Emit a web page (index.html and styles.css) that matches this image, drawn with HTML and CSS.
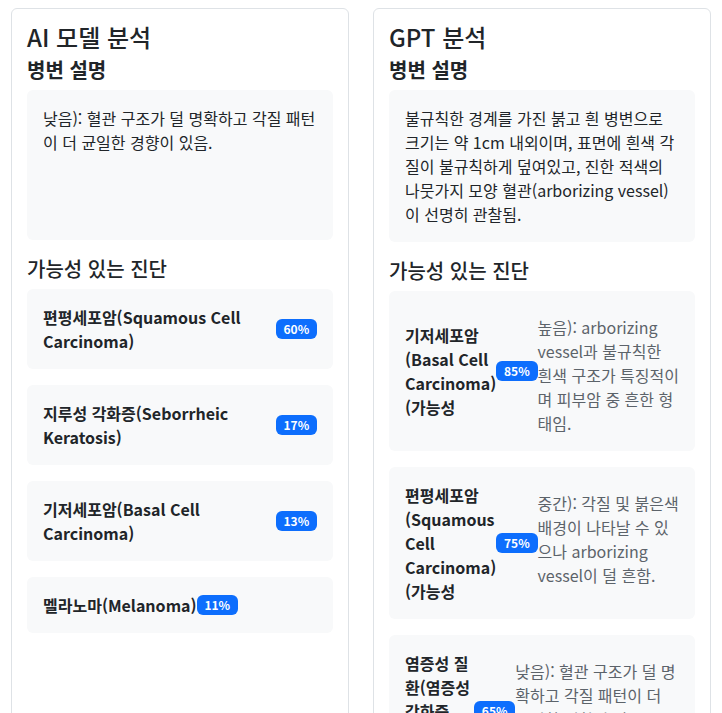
FILE: index.html
```html
<!DOCTYPE html>
<html lang="ko">
<head>
<meta charset="utf-8">
<title>분석 결과</title>
<link rel="stylesheet" href="styles.css">
</head>
<body>
<div class="layout">
  <section class="card">
    <h4 class="card-title">AI 모델 분석</h4>
    <h5 class="section-title">병변 설명</h5>
    <div class="desc-box">낮음): 혈관 구조가 덜 명확하고 각질 패턴이 더 균일한 경향이 있음.</div>
    <h5 class="section-sub">가능성 있는 진단</h5>
    <div class="diag">
      <strong class="diag-name">편평세포암(Squamous Cell Carcinoma)</strong>
      <span class="badge">60%</span>
    </div>
    <div class="diag">
      <strong class="diag-name">지루성 각화증(Seborrheic Keratosis)</strong>
      <span class="badge">17%</span>
    </div>
    <div class="diag">
      <strong class="diag-name">기저세포암(Basal Cell Carcinoma)</strong>
      <span class="badge">13%</span>
    </div>
    <div class="diag">
      <strong class="diag-name">멜라노마(Melanoma)</strong>
      <span class="badge">11%</span>
    </div>
  </section>
  <section class="card">
    <h4 class="card-title">GPT 분석</h4>
    <h5 class="section-title">병변 설명</h5>
    <div class="desc-box">불규칙한 경계를 가진 붉고 흰 병변으로 크기는 약 1cm 내외이며, 표면에 흰색 각질이 불규칙하게 덮여있고, 진한 적색의 나뭇가지 모양 혈관(arborizing vessel)이 선명히 관찰됨.</div>
    <h5 class="section-sub">가능성 있는 진단</h5>
    <div class="diag">
      <strong class="diag-name diag-name--fit">기저세포암(Basal Cell Carcinoma)(가능성</strong>
      <span class="badge">85%</span>
      <span class="diag-desc">높음): arborizing vessel과 불규칙한 흰색 구조가 특징적이며 피부암 중 흔한 형태임.</span>
    </div>
    <div class="diag">
      <strong class="diag-name diag-name--fit">편평세포암(Squamous Cell Carcinoma)(가능성</strong>
      <span class="badge">75%</span>
      <span class="diag-desc">중간): 각질 및 붉은색 배경이 나타날 수 있으나 arborizing vessel이 덜 흔함.</span>
    </div>
    <div class="diag">
      <strong class="diag-name diag-name--narrow">염증성 질환(염증성 각화증 등)(가능성</strong>
      <span class="badge">65%</span>
      <span class="diag-desc">낮음): 혈관 구조가 덜 명확하고 각질 패턴이 더 균일한 경향이 있음.</span>
    </div>
  </section>
</div>
</body>
</html>
```
FILE: styles.css
```css
* { box-sizing: border-box; }
html, body {
  margin: 0;
  background: #fff;
}
body {
  font-family: "Noto Sans CJK KR", "Noto Sans", sans-serif;
  color: #212529;
  font-size: 16px;
  line-height: 1.5;
}
.layout {
  display: grid;
  grid-template-columns: 338px 338px;
  column-gap: 24px;
  padding: 8px 11px;
}
.card {
  border: 1px solid #dee2e6;
  border-radius: 6px;
  padding: 14px 15px 16px;
  min-width: 0;
}
.card-title {
  font-size: 24px;
  font-weight: 500;
  line-height: 1.2;
  margin: 0 0 6px;
}
.section-title {
  font-size: 20px;
  font-weight: 700;
  line-height: 1.2;
  margin: 0 0 8px;
}
.section-sub {
  font-size: 20px;
  font-weight: 500;
  line-height: 1.2;
  margin: 17px 0 8px;
}
.desc-box {
  background: #f8f9fa;
  border-radius: 6px;
  padding: 16px;
  min-height: 150px;
  font-size: 16px;
  line-height: 1.5;
}
.diag {
  background: #f8f9fa;
  border-radius: 6px;
  padding: 16px;
  margin-bottom: 16px;
  display: flex;
  align-items: center;
}
.diag-name {
  font-weight: 700;
}
.diag-name--fit {
  flex: 0 0 auto;
  width: min-content;
}
.diag-name--narrow {
  flex: 0 0 69px;
}
.badge {
  display: inline-block;
  flex: none;
  background: #0d6efd;
  color: #fff;
  font-size: 12px;
  font-weight: 700;
  line-height: 1;
  padding: 4.2px 7.8px;
  border-radius: 6px;
  white-space: nowrap;
}
.diag-desc {
  align-self: flex-start;
  margin-top: 8px;
  color: #5c636a;
  font-size: 16px;
  line-height: 1.5;
}
```
